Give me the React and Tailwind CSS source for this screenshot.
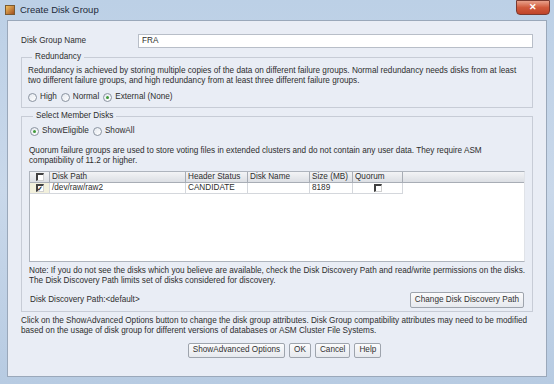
import React from "react";

function Radio({ checked, label }) {
  return (
    <span className="flex items-center gap-[3px]">
      <span className="w-[9px] h-[9px] rounded-full border border-[#8a93a0] bg-gradient-to-br from-[#e4e8ee] to-white flex items-center justify-center">
        {checked && <span className="w-[3px] h-[3px] rounded-full bg-[#3f9a3a]" />}
      </span>
      <span>{label}</span>
    </span>
  );
}

function Check({ checked }) {
  return (
    <span className="w-[8px] h-[8px] border-t-2 border-l-2 border-[#404040] border-r border-b border-r-[#d0d0d0] border-b-[#d0d0d0] bg-white flex items-center justify-center text-[7px] leading-none font-bold text-[#222]">
      {checked ? "✓" : ""}
    </span>
  );
}

function Btn({ children, className = "" }) {
  return (
    <button className={`h-[15px] px-[4px] border border-[#9ea4ad] rounded-[2px] bg-gradient-to-b from-[#fbfbfc] to-[#e6e9ee] leading-none text-[#333] ${className}`}>
      {children}
    </button>
  );
}

const cols = [
  { w: "w-[20px]", label: null },
  { w: "w-[136px]", label: "Disk Path" },
  { w: "w-[62px]", label: "Header Status" },
  { w: "w-[62px]", label: "Disk Name" },
  { w: "w-[43px]", label: "Size (MB)" },
  { w: "w-[50px]", label: "Quorum" },
];

export default function App() {
  return (
    <div
      className="w-[554px] h-[384px] bg-gradient-to-b from-[#bcd0e6] via-[#c9d8ea] to-[#b7cbe2] flex flex-col text-[#2e2e2e] overflow-hidden"
      style={{ fontFamily: '"Liberation Sans", Arial, sans-serif' }}
    >
      {/* title bar */}
      <div className="h-[20px] flex items-center px-[5px] relative shrink-0">
        <span className="w-[10px] h-[10px] bg-gradient-to-br from-[#f0c060] to-[#a05020] mr-[5px] border border-[#7a5a30]" />
        <span className="text-[9.5px] text-[#1e2a3a]">Create Disk Group</span>
        <span className="absolute right-[4px] top-0 w-[34px] h-[15px] rounded-b-[4px] bg-gradient-to-b from-[#e8a08a] via-[#d05a3c] to-[#c0442a] border border-[#7a3a30] flex items-center justify-center text-white text-[9px] font-bold">
          ✕
        </span>
      </div>

      {/* content */}
      <div className="mx-[7px] h-[357px] bg-[#e9edf5] border border-[#9aa8ba] px-[13px] text-[8.2px] leading-[10px] whitespace-nowrap">
        <div className="flex items-center mt-[13px] h-[14px]">
          <span className="w-[117px]">Disk Group Name</span>
          <div className="flex-1 h-[14px] bg-white border border-[#b8bec8] px-[3px] flex items-center">FRA</div>
        </div>

        <fieldset className="mt-[4px] border border-[#c7ccd6] px-[6px] h-[56px]">
          <legend className="px-[3px] ml-[4px]">Redundancy</legend>
          <p className="mt-[4px]">
            Redundancy is achieved by storing multiple copies of the data on different failure groups. Normal redundancy needs disks from at least
            <br />
            two different failure groups, and high redundancy from at least three different failure groups.
          </p>
          <div className="flex items-center gap-[4px] mt-[6px]">
            <Radio label="High" />
            <Radio label="Normal" />
            <Radio checked label="External (None)" />
          </div>
        </fieldset>

        <fieldset className="mt-[3px] border border-[#c7ccd6] px-[7px] h-[201px]">
          <legend className="px-[3px] ml-[4px]">Select Member Disks</legend>
          <div className="flex items-center gap-[4px] mt-[5px] ml-[1px]">
            <Radio checked label="ShowEligible" />
            <Radio label="ShowAll" />
          </div>
          <p className="mt-[10px]">
            Quorum failure groups are used to store voting files in extended clusters and do not contain any user data. They require ASM
            <br />
            compatibility of 11.2 or higher.
          </p>

          <div className="mt-[5px] h-[91px] bg-white border border-[#aeb4bd] border-r-[#e0e3e8]">
            <div className="flex h-[11px] bg-gradient-to-b from-[#f3f4f6] to-[#dcdfe4] border-b border-[#a8adb5]">
              {cols.map((c, i) => (
                <div key={i} className={`${c.w} border-r border-[#a8adb5] flex items-center ${i === 0 ? "justify-center" : "px-[2px]"}`}>
                  {i === 0 ? <Check /> : c.label}
                </div>
              ))}
            </div>
            <div className="flex h-[11px] border-b border-[#d4d7dc] w-[373px]">
              <div className="w-[20px] border-r border-[#d4d7dc] flex items-center justify-center bg-[#f2f0dc]">
                <Check checked />
              </div>
              <div className="w-[136px] border-r border-[#d4d7dc] px-[2px] flex items-center">/dev/raw/raw2</div>
              <div className="w-[62px] border-r border-[#d4d7dc] px-[2px] flex items-center">CANDIDATE</div>
              <div className="w-[62px] border-r border-[#d4d7dc]" />
              <div className="w-[43px] border-r border-[#d4d7dc] px-[2px] flex items-center">8189</div>
              <div className="w-[50px] border-r border-[#d4d7dc] flex items-center justify-center">
                <Check />
              </div>
            </div>
          </div>

          <p className="mt-[4px]">
            Note: If you do not see the disks which you believe are available, check the Disk Discovery Path and read/write permissions on the disks.
            <br />
            The Disk Discovery Path limits set of disks considered for discovery.
          </p>
          <div className="flex items-center justify-between mt-[6px] pr-[1px]">
            <span className="ml-[1px]">Disk Discovery Path:&lt;default&gt;</span>
            <Btn className="h-[16px] px-[3px]">Change Disk Discovery Path</Btn>
          </div>
        </fieldset>

        <p className="mt-[4px]">
          Click on the ShowAdvanced Options button to change the disk group attributes. Disk Group compatibility attributes may need to be modified
          <br />
          based on the usage of disk group for different versions of databases or ASM Cluster File Systems.
        </p>
        <div className="flex justify-center gap-[4px] mt-[7px] ml-[15px]">
          <Btn>ShowAdvanced Options</Btn>
          <Btn>OK</Btn>
          <Btn>Cancel</Btn>
          <Btn>Help</Btn>
        </div>
      </div>
    </div>
  );
}
